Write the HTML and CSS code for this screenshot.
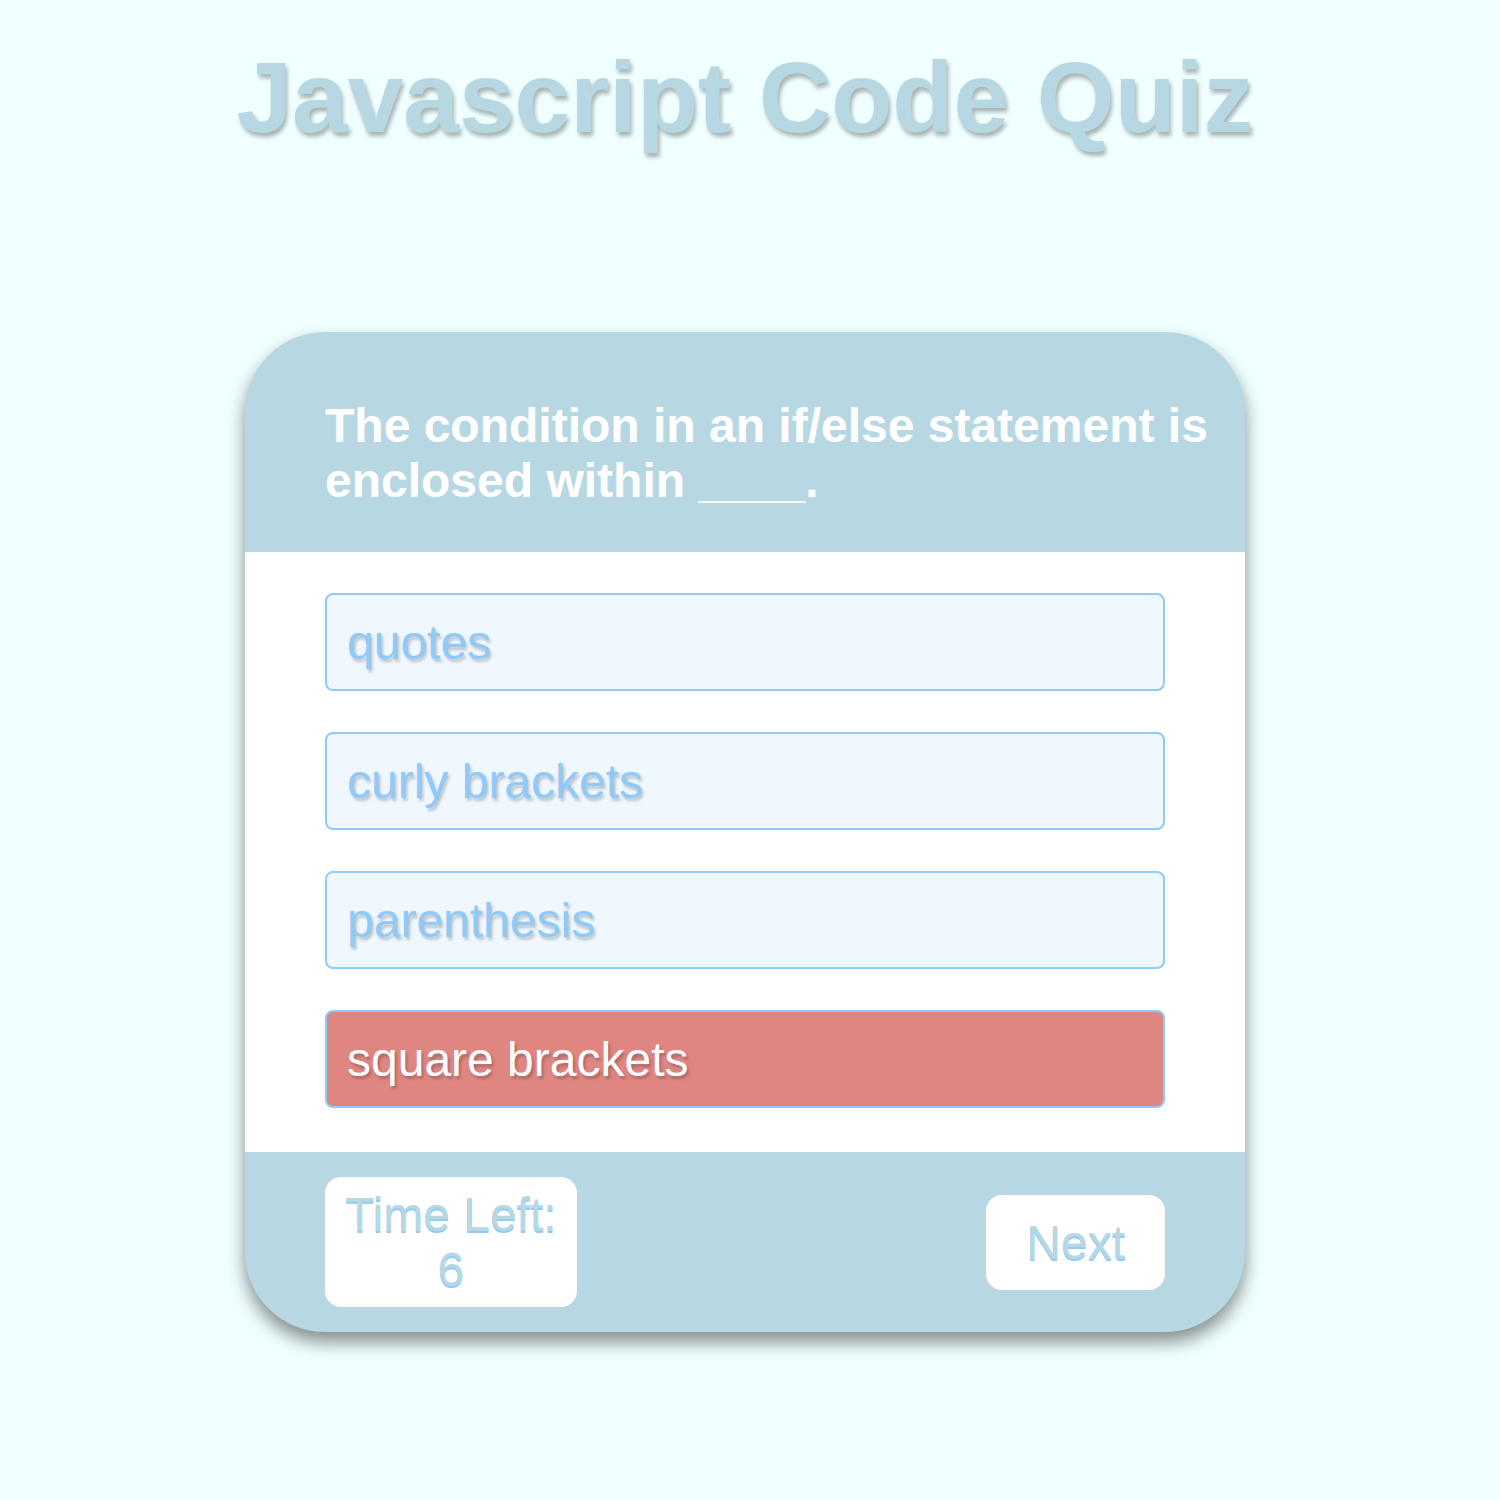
FILE: index.html
```html
<!DOCTYPE html>
<html lang="en">
<head>
<meta charset="utf-8">
<title>Javascript Code Quiz</title>
<link rel="stylesheet" href="styles.css">
</head>
<body>
<div class="page">
  <h1 class="title">Javascript Code Quiz</h1>
  <div class="card">
    <div class="card-head">
      <h2 class="question">The condition in an if/else statement is enclosed within ____.</h2>
    </div>
    <div class="answers">
      <button class="answer">quotes</button>
      <button class="answer">curly brackets</button>
      <button class="answer">parenthesis</button>
      <button class="answer wrong">square brackets</button>
    </div>
    <div class="card-foot">
      <div class="timer">Time Left:<br>6</div>
      <button class="next">Next</button>
    </div>
  </div>
</div>
</body>
</html>
```

FILE: styles.css
```css
html, body {
  margin: 0;
  padding: 0;
  background: #f0ffff;
  font-family: "Liberation Sans", Arial, Helvetica, sans-serif;
}

.page {
  width: 1490px;
  display: flex;
  flex-direction: column;
  align-items: center;
  padding-top: 40px;
  padding-bottom: 100px;
}

.title {
  margin: 0;
  font-size: 100px;
  font-weight: bold;
  line-height: 115px;
  color: #b7d8e3;
  text-shadow: 2px 4px 4px rgba(0, 0, 0, 0.3);
}

.card {
  margin-top: 177px;
  width: 1000px;
  background: #b7d8e3;
  border-radius: 80px;
  box-shadow: 0 10px 18px rgba(0, 0, 0, 0.45);
  overflow: hidden;
}

.card-head {
  height: 220px;
  box-sizing: border-box;
  padding: 66px 30px 0 80px;
}

.question {
  margin: 0;
  font-size: 48px;
  font-weight: bold;
  line-height: 55px;
  color: #ffffff;
}

.answers {
  background: #ffffff;
  height: 600px;
  box-sizing: border-box;
  padding: 41px 80px 0 80px;
  display: flex;
  flex-direction: column;
  gap: 41px;
}

.answer {
  display: block;
  width: 100%;
  height: 98px;
  box-sizing: border-box;
  text-align: left;
  padding: 0 20px;
  font-family: inherit;
  font-size: 48px;
  line-height: 55px;
  color: #90caf9;
  background: #f0f8ff;
  border: 2px solid #90caf9;
  border-radius: 8px;
  text-shadow: 2px 3px 3px rgba(0, 0, 0, 0.22);
}

.answer.wrong {
  background: #e08682;
  color: #ffffff;
}

.card-foot {
  height: 180px;
  box-sizing: border-box;
  padding: 0 80px;
  display: flex;
  align-items: center;
  justify-content: space-between;
}

.timer {
  background: #ffffff;
  border-radius: 16px;
  padding: 10px 20px;
  text-align: center;
  font-size: 48px;
  line-height: 55px;
  color: #b7d8e3;
  text-shadow: 0 2px 0 #90caf9;
}

.next {
  background: #ffffff;
  border: none;
  border-radius: 16px;
  padding: 20px 40px;
  font-family: inherit;
  font-size: 48px;
  line-height: 55px;
  color: #b7d8e3;
  text-shadow: 0 2px 0 #90caf9;
}
```
